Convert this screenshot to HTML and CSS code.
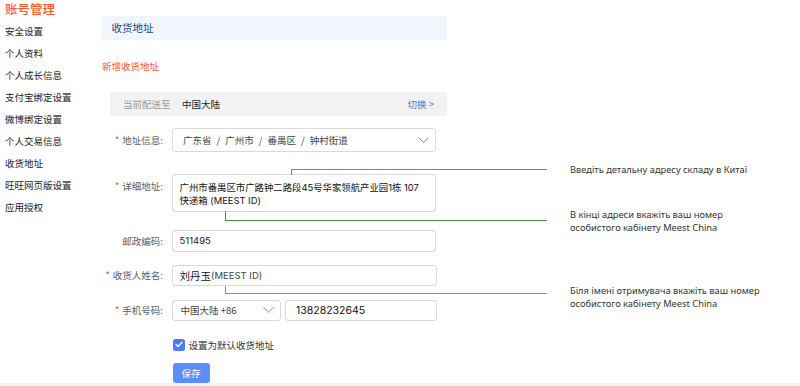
FILE: index.html
```html
<!DOCTYPE html>
<html lang="zh">
<head>
<meta charset="utf-8">
<title>收货地址</title>
<link rel="stylesheet" href="styles.css">
</head>
<body>
<div class="page">
  <aside class="sidebar">
    <div class="side-title">账号管理</div>
    <ul class="side-nav">
      <li>安全设置</li>
      <li>个人资料</li>
      <li>个人成长信息</li>
      <li>支付宝绑定设置</li>
      <li>微博绑定设置</li>
      <li>个人交易信息</li>
      <li>收货地址</li>
      <li>旺旺网页版设置</li>
      <li>应用授权</li>
    </ul>
  </aside>
  <main class="main">
    <div class="head">收货地址</div>
    <div class="add">新增收货地址</div>
    <div class="region-bar">
      <span class="rb-label">当前配送至</span>
      <span class="rb-value">中国大陆</span>
      <span class="rb-switch">切换 &gt;</span>
    </div>
    <div class="form">
      <div class="row row-addr">
        <div class="lbl"><span class="star">*</span>地址信息:</div>
        <div class="field select f-addr">
          <span class="sel-text">广东省<span class="sep">/</span>广州市<span class="sep">/</span>番禺区<span class="sep">/</span>钟村街道</span>
          <svg class="chev" width="11" height="6" viewBox="0 0 11 6"><path d="M0.5 0.5 L5.5 5.2 L10.5 0.5" fill="none" stroke="#888" stroke-width="1"/></svg>
        </div>
      </div>
      <div class="row row-detail">
        <div class="lbl lbl-top"><span class="star">*</span>详细地址:</div>
        <div class="field area">广州市番禺区市广路钟二路段45号华家领航产业园1栋 107<br>快递箱 (MEEST ID)</div>
      </div>
      <div class="row row-zip">
        <div class="lbl">邮政编码:</div>
        <div class="field input f-zip">511495</div>
      </div>
      <div class="row row-name">
        <div class="lbl"><span class="star">*</span>收货人姓名:</div>
        <div class="field input f-name"><span class="nm">刘丹玉</span><span class="nm-id">(MEEST ID)</span></div>
      </div>
      <div class="row row-phone">
        <div class="lbl"><span class="star">*</span>手机号码:</div>
        <div class="phone">
          <div class="field select f-cc">
            <span class="sel-text">中国大陆 +86</span>
            <svg class="chev" width="11" height="6" viewBox="0 0 11 6"><path d="M0.5 0.5 L5.5 5.2 L10.5 0.5" fill="none" stroke="#888" stroke-width="1"/></svg>
          </div>
          <div class="field input f-tel">13828232645</div>
        </div>
      </div>
      <div class="row row-check">
        <div class="lbl"></div>
        <div class="check">
          <span class="box"><svg width="8" height="7" viewBox="0 0 8 7"><path d="M1 3.6 L3 5.5 L7 1.2" fill="none" stroke="#fff" stroke-width="1.4" stroke-linecap="round" stroke-linejoin="round"/></svg></span>
          <span class="check-text">设置为默认收货地址</span>
        </div>
      </div>
      <div class="row row-btn">
        <div class="lbl"></div>
        <button class="save" type="button">保存</button>
      </div>
    </div>
  </main>
</div>
<div class="foot"></div>

<div class="conn conn-red"></div>
<div class="conn conn-green"></div>
<div class="conn conn-blue"></div>
<p class="note note-1">Введіть детальну адресу складу в Китаї</p>
<p class="note note-2">В кінці адреси вкажіть ваш номер<br>особистого кабінету Meest China</p>
<p class="note note-3">Біля імені отримувача вкажіть ваш номер<br>особистого кабінету Meest China</p>
</body>
</html>
```

FILE: styles.css
```css
html, body {
  margin: 0;
  padding: 0;
}
body {
  width: 800px;
  height: 386px;
  overflow: hidden;
  position: relative;
  background: #fff;
  font-family: "Inter", "Noto Sans CJK SC", sans-serif;
  color: #333;
}
.page {
  display: flex;
  height: 383px;
}
.sidebar {
  width: 97px;
  padding-left: 5px;
  flex: none;
}
.side-title {
  font-family: "Noto Sans CJK SC", sans-serif;
  font-size: 12.5px;
  line-height: 15px;
  padding-top: 1px;
  color: #ff5a2a;
  font-weight: 500;
  height: 19px;
}
.side-nav {
  list-style: none;
  margin: 0;
  padding: 0;
}
.side-nav li {
  font-family: "Noto Sans CJK SC", sans-serif;
  font-size: 9.5px;
  line-height: 22px;
  height: 22px;
  color: #222;
}
.main {
  width: 345px;
  flex: none;
  font-size: 9.5px;
}
.head {
  margin-top: 16px;
  height: 24px;
  line-height: 24px;
  background: #f1f6fd;
  padding-left: 9.5px;
  font-family: "Noto Sans CJK SC", sans-serif;
  font-size: 10.5px;
  color: #17477a;
}
.add {
  margin-top: 19px;
  line-height: 14px;
  color: #ff5a2a;
  font-family: "Noto Sans CJK SC", sans-serif;
}
.region-bar {
  margin-top: 19px;
  margin-left: 8px;
  height: 24px;
  background: #f2f2f2;
  display: flex;
  align-items: center;
  padding: 0 13px 0 13px;
  font-family: "Noto Sans CJK SC", sans-serif;
}
.rb-label {
  color: #9a9a9a;
  width: 59px;
}
.rb-value {
  color: #222;
  flex: 1;
}
.rb-switch {
  color: #3a7bd5;
  font-size: 9.5px;
}
.form {
  display: flex;
  flex-direction: column;
}
.row {
  display: flex;
  align-items: center;
  gap: 9px;
}
.lbl {
  width: 61px;
  flex: none;
  text-align: right;
  color: #5c5c5c;
  white-space: nowrap;
  font-family: "Noto Sans CJK SC", sans-serif;
}
.star {
  color: #f5452d;
  margin-right: 3px;
}
.field {
  box-sizing: border-box;
  border: 1px solid #d9d9d9;
  border-radius: 3px;
  background: #fff;
}
.select {
  display: flex;
  align-items: center;
  justify-content: space-between;
}
.sel-text {
  color: #444;
  font-family: "Noto Sans CJK SC", sans-serif;
}
.sep {
  margin: 0 5px;
}
.row-addr { margin-top: 12px; }
.f-addr {
  width: 264px;
  height: 24px;
  padding: 0 6px 0 10px;
}
.row-detail {
  margin-top: 22px;
  align-items: flex-start;
}
.lbl-top {
  line-height: 13px;
  padding-top: 6px;
}
.area {
  width: 264px;
  height: 37.5px;
  padding: 5.5px 0 0 6.5px;
  line-height: 13px;
  color: #111;
  font-size: 9.4px;
  white-space: nowrap;
  overflow: hidden;
}
.row-zip { margin-top: 18.5px; }
.input {
  height: 21.5px;
  display: flex;
  align-items: center;
  padding-left: 6.5px;
  color: #222;
}
.f-zip { width: 264px; }
.row-name { margin-top: 13px; }
.f-name { width: 265px; }
.nm {
  font-family: "Noto Sans CJK SC", sans-serif;
  font-size: 10.5px;
  color: #111;
}
.nm-id {
  color: #444;
  font-size: 9.5px;
}
.row-phone { margin-top: 13.5px; }
.phone {
  display: flex;
  gap: 4px;
}
.f-cc {
  width: 108.5px;
  height: 21.5px;
  padding: 0 6px 0 7.5px;
}
.f-tel {
  width: 152.5px;
  padding-left: 10.5px;
  font-size: 10.5px;
  color: #111;
}
.row-check { margin-top: 16.5px; }
.check {
  display: flex;
  align-items: center;
  gap: 4px;
  margin-left: 1px;
}
.box {
  width: 11.5px;
  height: 12px;
  border-radius: 2.5px;
  background: #4a7cf6;
  display: flex;
  align-items: center;
  justify-content: center;
}
.check-text {
  color: #333;
  font-family: "Noto Sans CJK SC", sans-serif;
}
.row-btn { margin-top: 11.5px; }
.save {
  width: 37px;
  height: 20px;
  border: none;
  border-radius: 3px;
  background: #5b8ef7;
  color: #fff;
  font-family: "Noto Sans CJK SC", sans-serif;
  font-size: 9.5px;
  padding: 0;
  margin-left: 0.5px;
}
.foot {
  height: 3px;
  background: #f3f3f3;
}
.conn {
  position: absolute;
  box-sizing: border-box;
}
.conn-red {
  left: 291px;
  top: 169px;
  width: 256px;
  height: 6px;
  border-top: 1px solid #f04a6c;
  border-left: 1px solid #f04a6c;
}
.conn-green {
  left: 225px;
  top: 211px;
  width: 322px;
  height: 10px;
  border-left: 1px solid #3a9a3e;
  border-bottom: 1px solid #3a9a3e;
}
.conn-blue {
  left: 225px;
  top: 286px;
  width: 322px;
  height: 8px;
  border-left: 1px solid #7d7df8;
  border-bottom: 1px solid #7d7df8;
}
.note {
  position: absolute;
  left: 570px;
  margin: 0;
  font-family: "Noto Sans", sans-serif;
  font-size: 9.3px;
  line-height: 13.3px;
  color: #333;
  white-space: nowrap;
}
.note-1 { top: 163px; }
.note-2 { top: 207.5px; }
.note-3 { top: 284px; }
```
